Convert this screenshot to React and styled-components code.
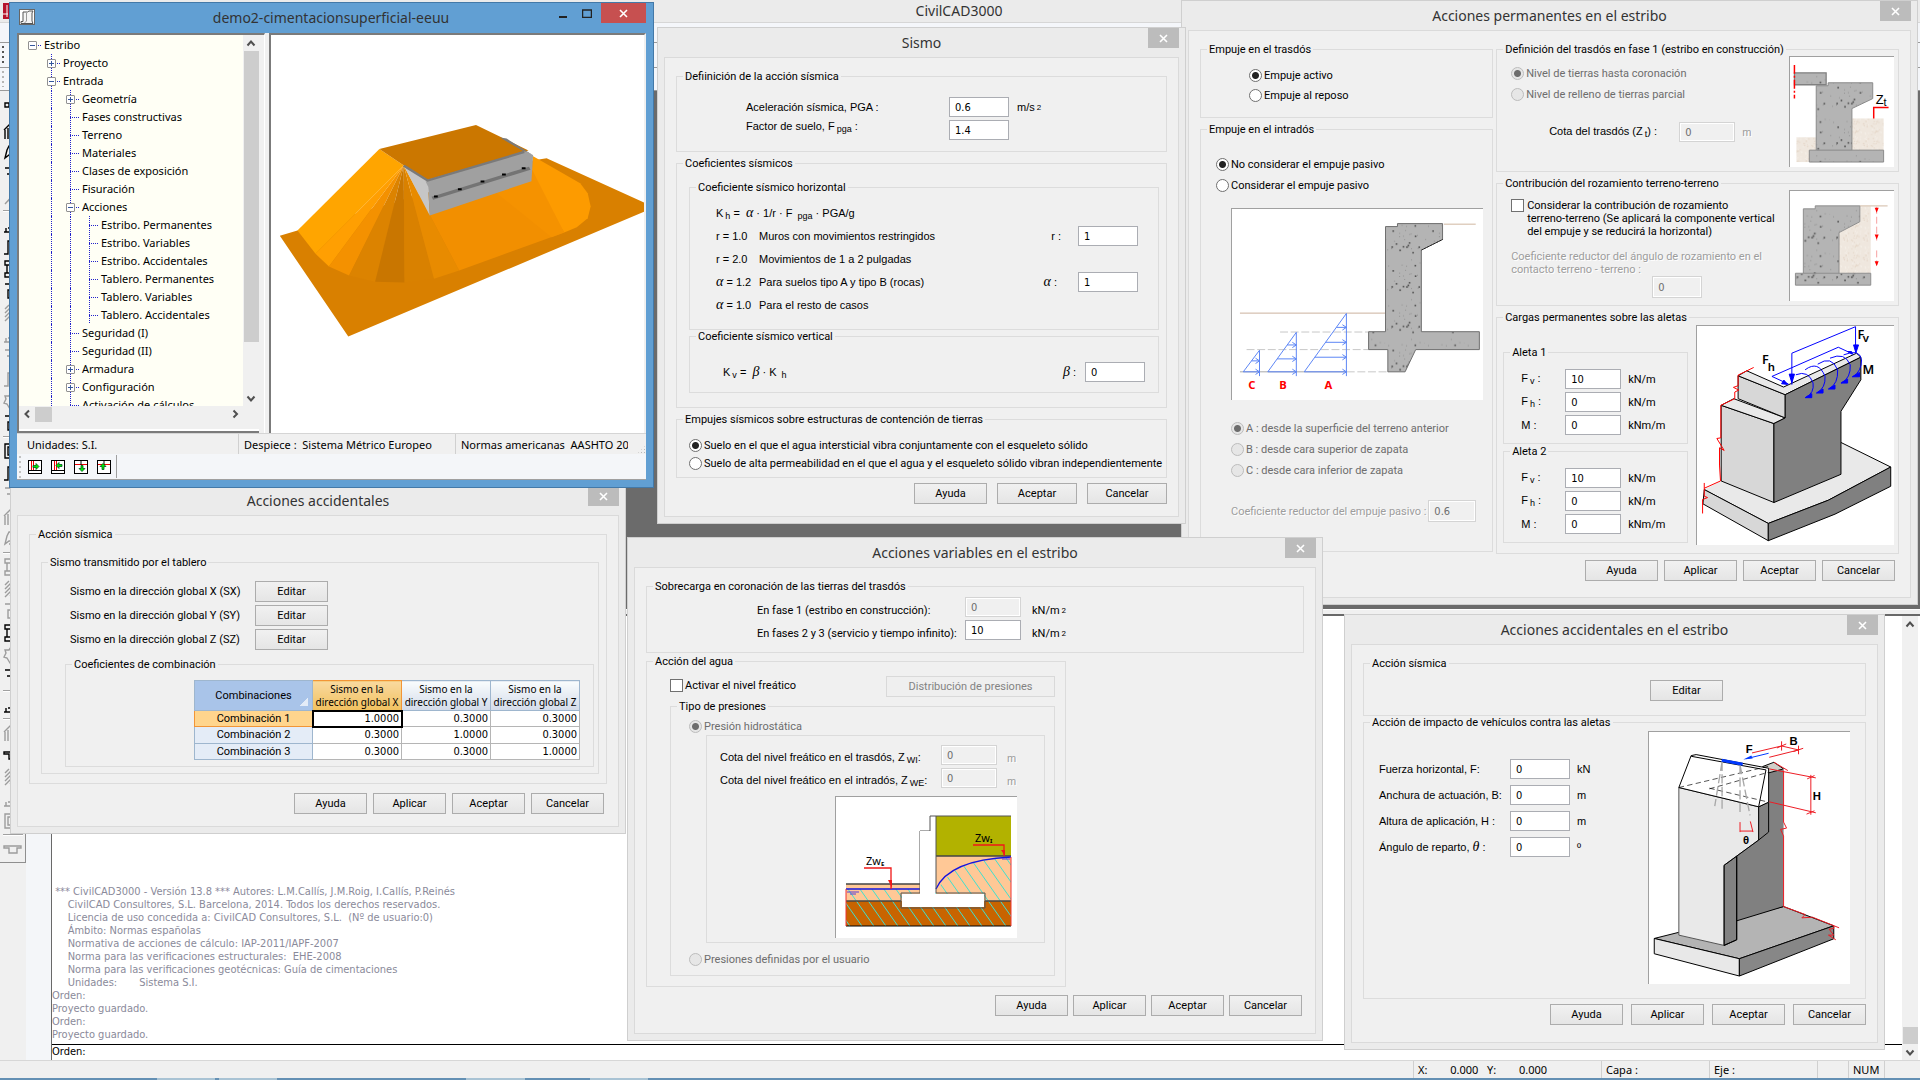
import React from 'react';
import styled, { createGlobalStyle, css } from 'styled-components';

const UI = 'Roboto, "Noto Sans", sans-serif';
const ARIAL = '"Liberation Sans", Arial, sans-serif';
const SEGOE = '"Noto Sans", "Open Sans", sans-serif';
const TAHOMA = '"DejaVu Sans Condensed", "DejaVu Sans", sans-serif';

const Global = createGlobalStyle`
  *, *::before, *::after { box-sizing: border-box; }
  body { margin: 0; background: #f0f0f0; color: #000; font: 11px/13px ${UI}; overflow: hidden; }
  input, button { font: inherit; color: inherit; margin: 0; }
  svg { display: block; }
`;

/* ---------- desktop and main window ---------- */

const Desktop = styled.div`
  position: relative;
  display: flex;
  flex-direction: column;
  height: 100vh;
  overflow: hidden;
`;

const MainTitle = styled.header`
  display: flex;
  align-items: center;
  height: 23px;
  padding: 0 3px;
  background: #ebebeb;
  border-bottom: 1px solid #d6d6d6;
  font: 14px/20px ${SEGOE};
  color: #333;
`;

const AppIcon = styled.div`
  width: 16px;
  height: 16px;
`;

const MainName = styled.h1`
  flex: 1;
  margin: 0;
  padding-right: 18px;
  text-align: center;
  font: inherit;
`;

const MainBars = styled.div`
  display: grid;
  grid-template-rows: 20px 25px 23px;
  background: #f4f6fa;
`;

const MainBar = styled.div`
  border-bottom: 1px solid #9a9a9a;
  padding: 3px 2px;
  &::before {
    content: '';
    display: block;
    width: 2px;
    height: 100%;
    background: repeating-linear-gradient(${p => p.$grip} 0 2px, transparent 2px 5px);
  }
`;

const MainBody = styled.div`
  flex: 1;
  display: flex;
  min-height: 0;
`;

const ToolColumn = styled.nav`
  display: flex;
  flex-direction: column;
  align-self: flex-start;
  width: 26px;
  padding: 7px 3px 2px;
  background: #f0f0f0;
  border-right: 1px solid #8f8f8f;
  border-bottom: 1px solid #8f8f8f;
`;

const ToolButton = styled.button`
  width: 20px;
  height: 22px;
  padding: 1px 0;
  border: 0;
  background: none;
  color: ${p => (p.$off ? '#9c9c9c' : '#000')};
`;

const ToolRule = styled.hr`
  width: 20px;
  height: 6px;
  margin: 0;
  border: 0;
  background: linear-gradient(transparent 2px, #a0a0a0 2px 3px, #fff 3px 4px, transparent 4px);
`;

const DockGap = styled.div`
  width: 25px;
  background: #f4f6f9;
`;

const Workspace = styled.div`
  flex: 1;
  display: flex;
  flex-direction: column;
  min-width: 0;
`;

const Mdi = styled.div`
  height: 518px;
  background: #6b6b6b;
`;

const SplitBar = styled.div`
  height: 7px;
  background: #f0f0f0;
  border-top: 1px solid #fff;
  border-bottom: 2px solid #696969;
`;

const Console = styled.section`
  flex: 1;
  display: flex;
  min-height: 0;
  padding-right: 2px;
  background: #fff;
  border-left: 1px solid #696969;
`;

const ConsoleText = styled.div`
  flex: 1;
  display: flex;
  flex-direction: column;
  justify-content: flex-end;
`;

const Log = styled.pre`
  margin: 0 0 3px;
  font: 11px/13px ${TAHOMA};
  color: #8a8a9a;
`;

const Prompt = styled.label`
  display: flex;
  height: 16px;
  border-top: 1px solid #000;
  font: 11px/14px ${TAHOMA};
  input { flex: 1; border: 0; padding: 0 4px; background: none; outline: 0; }
`;

const ScrollTrack = styled.div`
  display: flex;
  flex-direction: ${p => (p.$across ? 'row' : 'column')};
  align-items: center;
  justify-content: space-between;
  flex: none;
  ${p => (p.$across ? 'height: 16px; padding-right: 16px;' : 'width: 16px;')}
  background: #f0f0f0;
`;

const ScrollGap = styled.div`
  flex: 1;
`;

const Thumb = styled.div`
  background: #cdcdcd;
  ${p => (p.$across ? `width: ${p.$size}px; height: 15px;` : `height: ${p.$size}px; width: 15px;`)}
`;

const StatusBar = styled.footer`
  display: flex;
  justify-content: flex-end;
  height: 18px;
  border-top: 1px solid #d7d7d7;
  background: #f0f0f0;
  font: 11px/18px ${SEGOE};
`;

const StatusCell = styled.span`
  width: ${p => p.$w}px;
  padding-left: 4px;
  border-left: 1px solid #d0d0d0;
  white-space: pre;
`;

const TaskStrip = styled.div`
  height: 2px;
  background: linear-gradient(90deg, #6490b4 157px, #a9c3d4 157px 215px, #6490b4 215px 219px, #a9c3d4 219px 277px,
    #6490b4 277px 466px, #a9c3d4 466px 525px, #6490b4 525px 590px, #a9c3d4 590px 648px, #6490b4 648px);
`;

/* ---------- dialogs ---------- */

const Frame = styled.section`
  position: absolute;
  left: ${p => p.$x}px;
  top: ${p => p.$y}px;
  width: ${p => p.$w}px;
  display: flex;
  flex-direction: column;
  padding-bottom: 6px;
  background: #ebebeb;
  border: 1px solid #cfcfcf;
`;

const TitleBar = styled.header`
  display: grid;
  grid-template-columns: 31px 1fr 31px;
  height: 29px;
  padding: 0 6px;
`;

const Title = styled.h2`
  margin: 0;
  padding-top: 5px;
  text-align: center;
  font: 14px/20px ${SEGOE};
  color: #333;
`;

const Close = styled.button`
  display: flex;
  align-items: center;
  justify-content: center;
  height: 20px;
  padding: 0;
  border: 0;
  color: #fff;
  background: ${p => (p.$red ? '#c75050' : '#bcbcbc')};
`;

const Client = styled.div`
  display: flex;
  flex-direction: column;
  gap: ${p => p.$gap || 0}px;
  margin: 0 6px;
  padding: 12px 11px ${p => p.$foot}px;
  border: 1px solid #dadada;
  background: #f0f0f0;
`;

const Fieldset = styled.fieldset`
  min-width: 0;
  margin: 0;
  padding: 0;
  border: 1px solid #dcdcdc;
  ${p => p.$w && css`width: ${p.$w}px;`}
`;

const Legend = styled.legend`
  margin-left: 6px;
  padding: 0 2px;
  line-height: 13px;
`;

const Stack = styled.div`
  display: flex;
  flex-direction: column;
  gap: ${p => p.$gap || 0}px;
  padding: ${p => p.$pad || 0};
  ${p => p.$grow && css`flex: 1;`}
`;

const Line = styled.div`
  display: flex;
  align-items: ${p => p.$align || 'center'};
  justify-content: ${p => p.$justify || 'flex-start'};
  gap: ${p => p.$gap || 0}px;
  padding: ${p => p.$pad || 0};
`;

const Fields = styled.div`
  display: grid;
  grid-template-columns: ${p => p.$cols};
  grid-auto-rows: ${p => p.$row || 20}px;
  gap: ${p => p.$gap || 0}px 0;
  align-items: ${p => p.$align || 'center'};
  padding: ${p => p.$pad || 0};
  font-family: ${p => (p.$arial ? ARIAL : 'inherit')};
  white-space: nowrap;
`;

const Columns = styled.div`
  display: grid;
  grid-template-columns: 294fr 404fr;
  gap: 3px;
`;

const Text = styled.span`
  ${p => p.$off && css`color: #9d9d9d; text-shadow: 1px 1px #fff;`}
`;

const FieldLabel = styled.label`
  ${p => p.$off && css`color: #9d9d9d; text-shadow: 1px 1px #fff;`}
  ${p => p.$end && css`text-align: right; padding-right: ${p.$end}px;`}
  ${p => p.$top && css`align-self: start;`}
`;

const Wide = styled.span`grid-column: 1 / -1;`;
const Rest = styled.span`grid-column: 2 / -1;`;
const Unit = styled.span`font-family: ${UI};`;

const Sub = styled.span`
  display: inline-block;
  line-height: 10px;
  font-size: 9px;
  vertical-align: -2px;
  margin-left: 2px;
`;

const Sup = styled.span`
  display: inline-block;
  margin-left: 2px;
  line-height: 8px;
  font-size: 8px;
  vertical-align: 1px;
`;

const Greek = styled.i`
  font: italic 14px/13px "Liberation Serif", serif;
`;

const Field = styled.input`
  width: ${p => p.$w || 56}px;
  height: ${p => p.$h || 20}px;
  padding: 0 5px;
  border: 1px solid #abadb3;
  background: #fff;
  font: 11px/13px ${TAHOMA};
  outline: 0;
  &:disabled { border-color: #d4d4d4; background: #f0f0f0; color: #6d6d6d; box-shadow: inset 0 0 0 1px #fff; }
`;

const Push = styled.button`
  width: ${p => p.$w || 73}px;
  height: 21px;
  padding: 0;
  border: 1px solid #acacac;
  background: linear-gradient(#f1f1f1, #e5e5e5);
  &:disabled { border-color: #d9d9d9; background: #efefef; color: #838383; }
`;

const Choice = styled.label`
  display: flex;
  align-items: ${p => (p.$top ? 'flex-start' : 'center')};
  gap: ${p => (p.$top ? 3 : 2)}px;
  min-height: ${p => p.$h || 21}px;
  color: ${p => (p.$off ? '#6d6d6d' : '#000')};
  white-space: nowrap;
`;

const Radio = styled.input.attrs({ type: 'radio' })`
  appearance: none;
  flex: none;
  width: 13px;
  height: 13px;
  border: 1px solid #707070;
  border-radius: 50%;
  background: #fff;
  &:checked { background: radial-gradient(circle, #222 0 3px, #fff 4px); }
  &:disabled { border-color: #bcbcbc; background: #e6e6e6; }
  &:disabled:checked { background: radial-gradient(circle, #6d6d6d 0 3px, #e6e6e6 4px); }
`;

const Check = styled.input.attrs({ type: 'checkbox' })`
  appearance: none;
  flex: none;
  width: 13px;
  height: 13px;
  border: 1px solid #707070;
  background: #fff;
`;

const Picture = styled.figure`
  flex: none;
  align-self: flex-start;
  width: ${p => p.$w}px;
  height: ${p => p.$h}px;
  margin: 0;
  border-top: 1px solid #a0a0a0;
  border-left: 1px solid #a0a0a0;
  background: #fff;
  svg { width: 100%; height: 100%; }
`;

const Panel = styled.div`
  display: flex;
  flex-direction: column;
  gap: 8px;
  margin: 0 9px 0 35px;
  padding: 9px 0 4px 13px;
  border: 1px solid #dcdcdc;
`;

/* ---------- combination table ---------- */

const Sheet = styled.table`
  width: 386px;
  height: 80px;
  margin-left: 128px;
  border-collapse: collapse;
  table-layout: fixed;
  border: 1px solid #5f5f5f;
  background: #fff;
`;

const ColHead = styled.th`
  height: 30px;
  padding: 0;
  border: 1px solid #9eb6ce;
  font: 10px/13px ${SEGOE};
  white-space: nowrap;
  background: ${p => (p.$hot ? 'linear-gradient(#f9d99f, #f1c15f)' : 'linear-gradient(#f9fcfd, #d3dbe9)')};
  ${p => p.$hot && css`border-color: #f29536;`}
`;

const Corner = styled.th`
  width: 118px;
  padding: 0;
  font: 11px/13px ${UI};
  border: 1px solid #9eb6ce;
  background: linear-gradient(135deg, transparent 50%, #e4ecf7 50%) right 4px bottom 4px / 8px 8px no-repeat, #a9c4e9;
`;

const RowHead = styled.th`
  padding: 0;
  font: 11px/13px ${UI};
  border: 1px solid ${p => (p.$hot ? '#f29536' : '#9eb6ce')};
  background: ${p => (p.$hot ? '#ffd58d' : '#e4ecf7')};
`;

const Cell = styled.td`
  height: 16px;
  padding: 0 2px 0 0;
  border: 1px solid #b5b5b5;
  text-align: right;
  font: 11px/13px ${TAHOMA};
  ${p => p.$hot && css`outline: 2px solid #000; outline-offset: -1px;`}
`;

/* ---------- model window ---------- */

const ModelFrame = styled.section`
  position: absolute;
  left: 9px;
  top: 2px;
  width: 645px;
  padding: 0 7px 7px;
  background: #619fd3;
  border: 1px solid #4379a8;
`;

const ModelBar = styled.header`
  display: grid;
  grid-template-columns: 16px 1fr 20px 28px 45px;
  align-items: start;
  height: 30px;
  padding-left: 2px;
`;

const ModelIcon = styled.div`
  width: 16px;
  height: 16px;
  margin-top: 6px;
`;

const ModelTitle = styled(Title)`
  padding: 5px 0 0 74px;
`;

const GlyphButton = styled.button`
  height: 20px;
  padding: 0;
  border: 0;
  background: none;
  display: flex;
  align-items: center;
  justify-content: center;
`;

const ModelBody = styled.div`
  background: #f0f0f0;
`;

const Panes = styled.div`
  display: grid;
  grid-template-columns: 248px 1fr;
  gap: 4px;
  height: 401px;
  border-bottom: 1px solid #d5d5d5;
`;

const TreePane = styled.div`
  display: flex;
  flex-direction: column;
  padding-right: 5px;
  border: 2px solid #7b7b7b;
  border-right: 1px solid #fff;
  border-bottom: 0;
`;

const TreeMain = styled.div`
  display: flex;
  height: 371px;
`;

const TreeList = styled.ul`
  flex: 1;
  margin: 0;
  padding: 1px 0 0 9px;
  list-style: none;
  overflow: hidden;
  background: #fffff5;
  font: 11px/18px ${SEGOE};
`;

const Node = styled.li`
  display: flex;
  align-items: center;
  height: 18px;
  padding-left: 4px;
  white-space: nowrap;
`;

const Rail = styled.span`
  flex: none;
  width: 19px;
  height: 18px;
  border-left: 1px dotted ${p => (p.$on ? '#22c' : 'transparent')};
`;

const Knot = styled.span`
  flex: none;
  display: flex;
  align-items: center;
  width: 19px;
  height: 18px;
  padding-right: 9px;
  background:
    linear-gradient(90deg, #22c 50%, transparent 50%) 0 9px / 2px 1px repeat-x content-box,
    linear-gradient(#22c 50%, transparent 50%) 0 0 / 1px ${p => (p.$root ? 0 : 2)}px repeat-y;
`;

const Toggle = styled.button`
  flex: none;
  width: 9px;
  height: 9px;
  margin-left: -4px;
  padding: 0;
  border: 1px solid #919191;
  border-radius: 1px;
  background:
    linear-gradient(#34589c, #34589c) center / 5px 1px no-repeat,
    ${p => (p.$open ? '' : 'linear-gradient(#34589c, #34589c) center / 1px 5px no-repeat,')}
    #fff;
`;

const NodeName = styled.span`
  margin-left: -7px;
`;

const PaneFoot = styled.div`
  flex: 1;
  background: linear-gradient(transparent 7px, #fff 7px 9px, #7b7b7b 9px 11px, transparent 11px);
`;

const View = styled.div`
  border-top: 2px solid #7b7b7b;
  border-left: 2px solid #7b7b7b;
  border-right: 2px solid #f0f0f0;
  background: #fff;
  svg { width: 100%; height: 397px; }
`;

const ModelStatus = styled.div`
  display: grid;
  grid-template-columns: 221px 217px 1fr 18px;
  height: 20px;
  font: 11px/21px ${SEGOE};
  span { overflow: hidden; white-space: pre; padding-left: 5px; border-left: 1px solid #d0d0d0; }
  span:first-child { padding-left: 10px; border: 0; }
`;

const ModelTools = styled.div`
  display: flex;
  align-items: center;
  gap: 9px;
  height: 26px;
  padding-left: 2px;
  background: #f4f6f9;
  border-bottom: 1px solid #a0a0a0;
`;

const Grip = styled.i`
  width: 2px;
  height: 22px;
  margin-right: -2px;
  background: repeating-linear-gradient(#c2c2c2 0 2px, transparent 2px 5px);
`;

const ArrowButton = styled.button`
  width: 14px;
  height: 14px;
  padding: 0;
  border: 0;
  background: #fff;
`;

const ToolEnd = styled.i`
  width: 1px;
  height: 23px;
  margin-left: -4px;
  background: #a0a0a0;
`;

const Resize = styled.i`
  align-self: end;
  justify-self: end;
  width: 9px;
  height: 9px;
  background: radial-gradient(#b8b8b8 1px, transparent 1px) 0 0 / 3px 3px;
  clip-path: polygon(100% 0, 100% 100%, 0 100%);
`;

/* ---------- shared pieces ---------- */

const Cross = () => (
  <svg width="9" height="9" viewBox="0 0 9 9"><path d="M1 1l7 7M8 1l-7 7" stroke="currentColor" strokeWidth="1.6" /></svg>
);

const Chevron = ({ d }) => (
  <svg width="16" height="16" viewBox="0 0 16 16"><path d={d} fill="none" stroke="#505050" strokeWidth="2" /></svg>
);
const UP = 'M4.500 10.500 8 6.500l3.500 4';
const DOWN = 'M4.500 6.500 8 10.500l3.500-4';
const LEFT = 'M10 4.500 6.500 8l3.500 3.500';
const RIGHT = 'M6.500 4.500 10 8l-3.500 3.500';

const Dialog = ({ title, x, y, w, gap, foot, children }) => (
  <Frame $x={x} $y={y} $w={w}>
    <TitleBar>
      <i /><Title>{title}</Title><Close aria-label="Cerrar"><Cross /></Close>
    </TitleBar>
    <Client $gap={gap} $foot={foot}>{children}</Client>
  </Frame>
);

const Group = ({ title, w, pad, gap, children }) => (
  <Fieldset $w={w}>
    <Legend>{title}</Legend>
    <Stack $pad={pad} $gap={gap}>{children}</Stack>
  </Fieldset>
);

const Option = ({ name, on, off, h, children }) => (
  <Choice $off={off} $h={h}>
    <Radio name={name} defaultChecked={on} disabled={off} />{children}
  </Choice>
);

const Actions = ({ gap, pad }) => (
  <Line $justify="flex-end" $gap={gap} $pad={pad}>
    {['Ayuda', 'Aplicar', 'Aceptar', 'Cancelar'].map(l => <Push key={l}>{l}</Push>)}
  </Line>
);

/* ---------- drawings ---------- */

const Textures = ({ id, s = 1 }) => {
  const dots = (n, size, seed) => Array.from({ length: n }, (_, i) => {
    const a = Math.sin((i + 1) * seed) * 10000;
    const b = Math.sin((i + 7) * seed * 1.7) * 10000;
    return [(a - Math.floor(a)) * size, (b - Math.floor(b)) * size];
  });
  return (
    <defs>
      <pattern id={id + 'c'} width={40 * s} height={40 * s} patternUnits="userSpaceOnUse">
        <rect width={40 * s} height={40 * s} fill="#b4b4b4" />
        {dots(34, 40 * s, 12.9).map(([x, y], i) => (
          <rect key={i} x={x} y={y} width={s * (i % 3 ? 0.8 : 1.6)} height={s * (i % 3 ? 0.8 : 1.6)} fill={i % 3 ? '#7d7d7d' : '#505050'} />
        ))}
      </pattern>
      <pattern id={id + 's'} width={20 * s} height={20 * s} patternUnits="userSpaceOnUse">
        <rect width={20 * s} height={20 * s} fill="#efe7de" />
        {dots(60, 20 * s, 7.3).map(([x, y], i) => (
          <rect key={i} x={x} y={y} width={s} height={s} fill={i % 2 ? '#e3d3c3' : '#f7f2ec'} />
        ))}
      </pattern>
    </defs>
  );
};

const PassivePush = () => {
  const tri = (x0, x1, top, ys) => (
    <g stroke="#5c85f5" fill="none" strokeWidth="3">
      <path d={`M${x0} 517L${x1} ${top}V530`} />
      {ys.map(y => {
        const sx = x0 + ((517 - y) / (517 - top)) * (x1 - x0);
        return <path key={y} d={`M${sx} ${y}H${x1}M${x1 - 12} ${y - 8}L${x1} ${y}l-12 8`} />;
      })}
    </g>
  );
  return (
    <svg viewBox="20 26 753 576">
      <Textures id="pp" s={3} />
      <path d="M42 340H481" stroke="#cbb09c" strokeWidth="3" />
      <path d="M657 72H753" stroke="#e0cfc0" strokeWidth="5" />
      <path d="M163 397H430M62 450H430M364 517H488" stroke="#c8c8c8" strokeWidth="3" strokeDasharray="24 8" />
      <path d="M42 517H364" stroke="#a8a8a8" strokeWidth="3" />
      <path d="M481 79H517V70H653V118L589 150V396H764V450H572L540 517H488V450H430V396H481Z" fill="url(#ppc)" stroke="#6e6e6e" strokeWidth="3" />
      <path d="M653 118L589 150" stroke="#000" strokeWidth="3" strokeDasharray="3 2" />
      {tri(52, 101, 452, [484, 517])}
      {tri(126, 212, 398, [436, 478, 517])}
      {tri(236, 363, 341, [383, 428, 473, 517])}
      <g fill="#f00" fontFamily="Noto Sans" fontWeight="700" fontSize="34" textAnchor="middle">
        <text x="78" y="569">C</text><text x="172" y="569">B</text><text x="309" y="569">A</text>
      </g>
    </svg>
  );
};

const BackfillLevel = () => (
  <svg viewBox="0 0 104 111">
    <Textures id="bl" />
    <rect x="6" y="81" width="20" height="25" fill="url(#bls)" />
    <rect x="62" y="62" width="32" height="33" fill="url(#bls)" />
    <path d="M4 16H36V28H4Z" fill="url(#blc)" stroke="#808080" strokeWidth="1.300" />
    <path d="M26 29H38V26H83V42L62 52V94H94V106H19V94H26Z" fill="url(#blc)" stroke="#8a8a8a" />
    <path d="M26 94H62" stroke="#8a8a8a" />
    <path d="M4 8V42" stroke="#f00" strokeWidth="1.500" strokeDasharray="9 2 2 2" />
    <path d="M84 62V51H99" fill="none" stroke="#f00" strokeWidth="1.500" />
    <text x="86" y="47" fontFamily="Liberation Sans" fontSize="13">Z<tspan fontSize="11" dy="2">t</tspan></text>
  </svg>
);

const SoilFriction = () => (
  <svg viewBox="0 0 104 111">
    <Textures id="sf" />
    <path d="M70 15H81V83H49V42L70 31Z" fill="url(#sfs)" />
    <path d="M70 15H98" stroke="#e0d0c2" strokeWidth="1.500" />
    <path d="M13 18H25V15H70V31L49 42V83H81V95H5V83H13Z" fill="url(#sfc)" stroke="#8e8e8e" />
    <path d="M13 83H49" stroke="#8e8e8e" />
    <path d="M87 16V50M87 60V75" stroke="#f6a0a0" strokeDasharray="7 3" />
    <path d="M85 17h4l-2 5zM85 44h4l-2 5zM85 71h4l-2 5z" fill="#f00" />
  </svg>
);

const WingLoads = () => (
  <svg viewBox="25 13 592 660" fill="none" stroke="#000" strokeWidth="3" strokeLinejoin="round">
    <path d="M46 506L97 480L458 364L608 438L420 538L239 608Z" fill="#e9e9e9" stroke="none" />
    <path d="M458 364L608 438L420 538L239 608L46 506" />
    <path d="M42 549L46 506L239 608V660Z" fill="#d7d7d7" />
    <path d="M239 608L420 538L608 438V496L440 580L239 660Z" fill="#808080" />
    <path d="M97 252V480L256 545V307Z" fill="#d7d7d7" />
    <path d="M97 252L135 232L290 290L256 307Z" fill="#e9e9e9" />
    <path d="M148 163V232L290 290V220Z" fill="#d7d7d7" />
    <path d="M148 163L174 148L285 197L505 95L518 107L290 220Z" fill="#e9e9e9" />
    <path d="M290 220L518 107V175L458 270V460L256 545V307L290 290Z" fill="#808080" />
    <path d="M195 138L148 161V193L134 198L150 206L138 212V232L96 252V350L84 352L106 388L92 380V432L95 480L46 502M46 486V526L56 530L41 536V578" stroke="#f00" />
    <g stroke="#00f">
      <path d="M310 190V95L502 15V85M300 188L250 165L450 77L495 98" />
      <path d="M302 158l8 26 8-26zM496 70l7 24 8-24zM297 189l-18-2 7-11zM492 98l-14-8 12 0z" fill="#00f" />
      <path d="M322 160Q360 145 374 185Q378 215 352 228M350 145Q390 115 410 165Q412 200 386 214M388 128Q430 100 448 145Q450 188 422 202M425 110Q470 90 486 130Q488 170 460 184M466 100Q515 80 520 115Q520 150 495 165" />
      <path d="M350 229l20-12v12zM384 215l20-12v12zM420 203l20-12v12zM458 185l20-12v12zM492 166l22-13v13z" fill="#00f" />
    </g>
    <g fill="#000" stroke="none" fontFamily="Noto Sans" fontWeight="600" fontSize="38">
      <text x="220" y="128">F</text><text x="237" y="150" fontSize="34">h</text>
      <text x="508" y="52">F</text><text x="524" y="61" fontSize="34">v</text>
      <text x="523" y="158">M</text>
    </g>
  </svg>
);

const Impact = () => (
  <svg viewBox="29 19 603 758" fill="none" stroke="#000" strokeWidth="3" strokeLinejoin="round">
    <path d="M44 640L116 622L433 544L584 602L300 701Z" fill="#b4b4b4" />
    <path d="M44 640V686L300 753V701Z" fill="#e8e8e8" />
    <path d="M300 701L584 602V641L300 753Z" fill="#878787" />
    <path d="M388 125L433 133V544L292 587V392L388 320Z" fill="#808080" stroke="none" />
    <path d="M370 123L404 110L433 130L388 142Z" fill="#d0cec8" />
    <path d="M292 392V644L254 661V420Z" fill="#828282" />
    <path d="M118 186L358 244V344L254 420V661L118 630Z" fill="#e9e9e9" stroke="#555" />
    <path d="M358 244L388 230V320L358 344Z" fill="#828282" />
    <path d="M358 344L254 420M254 420V661L292 644V392M292 587L433 544" />
    <path d="M118 186L155 90L170 87L388 128V230L358 244L118 186Z" fill="#fff" />
    <path d="M155 92L380 133L358 244" />
    <path d="M118 186L388 122M210 190L388 140M210 188L388 230" strokeDasharray="16 10" strokeWidth="2" />
    <path d="M248 108L226 242M248 108V250M302 118V265M302 118L332 270" stroke="#a8a8a8" strokeWidth="4" strokeDasharray="28 10" />
    <path d="M247 104L310 116" stroke="#0038ff" strokeWidth="9" />
    <path d="M388 83L322 99" stroke="#0038ff" /><path d="M312 102l24-12 4 9z" fill="#0038ff" stroke="none" />
    <g stroke="#ed1c24">
      <path d="M338 82L427 61L478 73L390 95M427 47V75M413 67L441 55M478 60V86M462 78L492 68" />
      <path d="M404 110L446 135M390 130L530 157M390 229L530 262M515 148V268M504 160L526 150M502 266L526 256" />
      <path d="M433 135V290L442 308L424 312L433 332V544L498 568L488 578L520 576L600 608" />
      <path d="M584 602V610L570 612L584 630L568 630L590 644" />
      <path d="M302 290V320M302 317H341M333 288L341 320" />
    </g>
    <g fill="#000" stroke="none" fontFamily="Liberation Sans" fontWeight="700" fontSize="34">
      <text x="319" y="81">F</text><text x="451" y="57">B</text><text x="521" y="224">H</text><text x="311" y="356">θ</text>
    </g>
  </svg>
);

const Pressure = () => (
  <svg viewBox="0 0 181 141">
    <defs><clipPath id="wet"><path d="M10 92H84V96H100Q115 62 175 60V129H10Z" /></clipPath></defs>
    <rect x="100" y="19" width="75" height="41" fill="#b2b200" />
    <path d="M100 59H175V104H100ZM10 87H85V104H10Z" fill="#ffc896" />
    <rect x="10" y="104" width="165" height="25" fill="#c86400" />
    <g clipPath="url(#wet)" stroke="#3fe0d0" strokeWidth="1">
      {Array.from({ length: 21 }, (_, i) => <path key={i} d={`M${i * 12 - 60} 58L${i * 12 - 8} 132`} />)}
    </g>
    <path d="M10 87H84M10 104H65M100 59H175M149 104H175" stroke="#444" strokeWidth="1.500" />
    <path d="M10 129H175" stroke="#000" />
    <path d="M10 92H85M100 92Q113 63 175 60" fill="none" stroke="#1414e0" strokeWidth="1.300" />
    <path d="M11 95h12M14 97h6M166 62h8" stroke="#5a3fd6" />
    <path d="M10 92V129M175 60V129" stroke="#e33" />
    <path d="M84 34H94V19H175M84 34V96H65V111H149V96H100V19" fill="none" stroke="#555" />
    <path d="M84 34H95V20H99V97H148V110H66V97H84Z" fill="#fff" />
    <path d="M28 71H55V92M137 48H168V59" fill="none" stroke="#f01818" strokeWidth="1.300" />
    <path d="M52 83h4v8zM165 53h4v6z" fill="#f01818" />
    <g fontFamily="Noto Sans" fontSize="11">
      <text x="30" y="68">Zw<tspan fontSize="6" fontWeight="700" dy="1">E</tspan></text>
      <text x="139" y="45">Zw<tspan fontSize="6" fontWeight="700" dy="1">I</tspan></text>
    </g>
  </svg>
);

const Terrain = () => (
  <svg viewBox="642 105 888 1192" preserveAspectRatio="none">
    <path d="M663 708L705 692L958 600L1265 482L1298 475L1530 608V636L826 1010Z" fill="#d98000" />
    <path d="M900 447L705 692L748 762L958 497Z" fill="#ffa500" />
    <path d="M958 497L748 762L780 800Z" fill="#ff9f02" />
    <path d="M958 497L780 800L828 827Z" fill="#f49100" />
    <path d="M958 497L828 827L890 846Z" fill="#dc8300" />
    <path d="M958 497L890 846L960 848Z" fill="#c97600" />
    <path d="M958 497L960 848L1030 837Z" fill="#d98100" />
    <path d="M958 497L1030 837L1090 812Z" fill="#e88b00" />
    <path d="M958 497L1090 812L1340 698L1262 540L1020 640Z" fill="#f28f00" />
    <path d="M1265 468L1262 540L1340 698L1370 682L1396 655L1403 620L1396 580L1378 550Z" fill="#fd9b00" />
    <path d="M1264 510L1340 698L1310 712L1180 580Z" fill="#f59200" />
    <path d="M900 447L1130 375L1255 452L1015 540L958 497Z" fill="#cb7700" />
    <path d="M1187 413L1203 416L1266 466L1240 452Z" fill="#7a7a7a" />
    <path d="M958 497L1015 540L1020 647Z" fill="#c6c6c6" />
    <path d="M1010 545L1250 455L1266 466L1262 544L1020 647L1016 560Z" fill="#a0a0a0" />
    <path d="M958 497L1015 542L1245 456" fill="none" stroke="#7a7a7a" strokeWidth="7" />
    <path d="M1026 595L1258 505" stroke="#747474" strokeWidth="10" />
    <path d="M1030 590h9M1087 568h9M1141 545h9M1192 524h9M1239 505h9" stroke="#000" strokeWidth="6" />
  </svg>
);

const SHAPES = {
  node: 'M2 4h4v4H2zM6 6l6 10M14 3v14',
  arch: 'M1 9l6-6 10 2M2 9v9M5 7v11M9 6v12M13 6v12',
  ring: 'M6 3h10v9H6l-4 3 2-8zM6 15h8',
  tee: 'M2 3h14M9 3v5M4 9h12v2l-4 6',
  pen: 'M2 17L12 6l4 3-9 8M5 13l4 3',
  wall: 'M1 17h16M3 13v4M5 13h4V2M8 13h7v4',
  bench: 'M1 17h4V4h12v4M9 4v13',
  stack: 'M2 2h14v4H2zM4 6v8M8 6v8M2 14h14v4H2z',
  step: 'M2 3h14v6H5v8h12',
  hatch: 'M2 6l4-4M2 10l8-8M2 14L14 2M2 18L16 4M7 17l9-9',
  slab: 'M1 7h17v2h-4v5H6V9H1z',
  gear: 'M2 5h4l2-3 4 3 4 2v7l-4 3-5 1-3-5-3-1 2-4z',
  frame: 'M2 3h16v14H2zM5 6h10v8H5z',
};
const TOOLS = [
  'node', 'arch', 'ring', 'tee', '-pen', 0,
  'wall', 'bench', 'stack', 'step', '-hatch', '-wall', '-tee', '-bench', '-gear', 'step', 0,
  'frame', 'bench', '-tee', '-arch', '-ring', 0,
  '-stack', '-hatch', '-step', 'stack', '-gear', 'tee', 0,
  'wall', 0, '-arch', 'slab', '-hatch', '-wall', '-frame', 0, '-slab',
];

/* ---------- windows ---------- */

const LOG = ` *** CivilCAD3000 - Versión 13.8 *** Autores: L.M.Callís, J.M.Roig, I.Callís, P.Reinés
     CivilCAD Consultores, S.L. Barcelona, 2014. Todos los derechos reservados.
     Licencia de uso concedida a: CivilCAD Consultores, S.L.  (Nº de usuario:0)
     Ámbito: Normas españolas
     Normativa de acciones de cálculo: IAP-2011/IAPF-2007
     Norma para las verificaciones estructurales:  EHE-2008
     Norma para las verificaciones geotécnicas: Guía de cimentaciones
     Unidades:       Sistema S.I.
Orden:
Proyecto guardado.
Orden:
Proyecto guardado.`;

const Main = () => (
  <>
    <MainTitle>
      <AppIcon>
        <svg width="16" height="16" viewBox="0 0 16 16"><rect width="16" height="16" fill="#b5122b" /><path d="M0 11h5M4 2v12M8 3v10h6" stroke="#fff" fill="none" /></svg>
      </AppIcon>
      <MainName>CivilCAD3000</MainName>
    </MainTitle>
    <MainBars><MainBar $grip="transparent" /><MainBar $grip="#555" /><MainBar $grip="#b5b5b5" /></MainBars>
    <MainBody>
      <ToolColumn>
        {TOOLS.map((t, i) => t === 0 ? <ToolRule key={i} /> : (
          <ToolButton key={i} $off={t[0] === '-'} aria-label={`Herramienta ${i + 1}`}>
            <svg width="20" height="20" viewBox="0 0 20 20">
              <path d={SHAPES[t.replace('-', '')]} fill="none" stroke="currentColor" strokeWidth="1.400" />
            </svg>
          </ToolButton>
        ))}
      </ToolColumn>
      <DockGap />
      <Workspace>
        <Mdi />
        <SplitBar />
        <Console>
          <ConsoleText>
            <Log>{LOG}</Log>
            <Prompt>Orden:<input /></Prompt>
          </ConsoleText>
          <ScrollTrack>
            <Chevron d={UP} /><ScrollGap /><Thumb $size={17} /><Chevron d={DOWN} />
          </ScrollTrack>
        </Console>
      </Workspace>
    </MainBody>
    <StatusBar>
      <StatusCell $w={188}>{'X:'.padEnd(10)}0.000{'   Y:'.padEnd(13)}0.000</StatusCell>
      <StatusCell $w={108}>Capa :</StatusCell>
      <StatusCell $w={108}>Eje :</StatusCell>
      <StatusCell $w={31} />
      <StatusCell $w={36}>NUM</StatusCell>
      <StatusCell $w={36} />
    </StatusBar>
    <TaskStrip />
  </>
);

const TREE = [
  ['Estribo', 0, '-'], ['Proyecto', 1, '+'], ['Entrada', 1, '-'], ['Geometría', 2, '+'], ['Fases constructivas', 2],
  ['Terreno', 2], ['Materiales', 2], ['Clases de exposición', 2], ['Fisuración', 2], ['Acciones', 2, '-'],
  ['Estribo. Permanentes', 3], ['Estribo. Variables', 3], ['Estribo. Accidentales', 3], ['Tablero. Permanentes', 3],
  ['Tablero. Variables', 3], ['Tablero. Accidentales', 3], ['Seguridad (I)', 2], ['Seguridad (II)', 2],
  ['Armadura', 2, '+'], ['Configuración', 2, '+'], ['Activación de cálculos', 2],
];

const Tree = () => (
  <TreeList>
    {TREE.map(([name, level, box]) => (
      <Node key={name}>
        {Array.from({ length: level }, (_, i) => <Rail key={i} $on={i > 0} />)}
        <Knot $root={level === 0}>{box && <Toggle $open={box === '-'} aria-label={name} />}</Knot>
        <NodeName>{name}</NodeName>
      </Node>
    ))}
  </TreeList>
);

const ArrowIcon = ({ turn, side }) => (
  <svg width="14" height="14" viewBox="0 0 14 14">
    <rect x=".5" y=".5" width="13" height="13" fill="#fff" stroke="#000" />
    <path d={side ? 'M3.500 1v9M5.500 1v9' : 'M1 4.500h12'} stroke="#e00" />
    <path d={side ? 'M1 10.500h12' : 'M7 1v4'} stroke="#000" />
    <path d="M5 5.500h3V3.500l3 3L8 9.500V7.500H5z" fill="#0e0" stroke="#052" strokeWidth=".8" transform={side ? (turn ? 'rotate(180 8 6)' : '') : `rotate(${turn} 7 7.500)`} />
  </svg>
);

const Model = () => (
  <ModelFrame>
    <ModelBar>
      <ModelIcon>
        <svg width="16" height="16" viewBox="0 0 16 16">
          <rect x=".5" y=".5" width="15" height="15" fill="#fff" stroke="#666" />
          <path d="M2 14.500V12.500h2V3h4.500l1.500-1h4l-1 2v8l1 2.500z" fill="#f4f4f4" stroke="#555" /><path d="M7.500 4v8l-2 2" fill="none" stroke="#999" />
        </svg>
      </ModelIcon>
      <ModelTitle>demo2-cimentacionsuperficial-eeuu</ModelTitle>
      <GlyphButton aria-label="Minimizar"><svg width="8" height="9"><path d="M0 8h8" stroke="#222" strokeWidth="2" /></svg></GlyphButton>
      <GlyphButton aria-label="Maximizar"><svg width="10" height="9"><path d="M.5 1h9v7.500h-9z" fill="none" stroke="#222" strokeWidth="1.500" /></svg></GlyphButton>
      <Close $red aria-label="Cerrar"><Cross /></Close>
    </ModelBar>
    <ModelBody>
      <Panes>
        <TreePane>
          <TreeMain>
            <Tree />
            <ScrollTrack>
              <Chevron d={UP} /><Thumb $size={291} /><ScrollGap /><Chevron d={DOWN} />
            </ScrollTrack>
          </TreeMain>
          <ScrollTrack $across>
            <Chevron d={LEFT} /><Thumb $across $size={17} /><ScrollGap /><Chevron d={RIGHT} />
          </ScrollTrack>
          <PaneFoot />
        </TreePane>
        <View><Terrain /></View>
      </Panes>
      <ModelStatus>
        <span>Unidades: S.I.</span>
        <span>Despiece :  Sistema Métrico Europeo</span>
        <span>Normas americanas  AASHTO 20</span>
        <Resize />
      </ModelStatus>
      <ModelTools>
        <Grip />
        <ArrowButton aria-label="Derecha"><ArrowIcon side turn={0} /></ArrowButton>
        <ArrowButton aria-label="Izquierda"><ArrowIcon side turn={180} /></ArrowButton>
        <ArrowButton aria-label="Abajo"><ArrowIcon turn={90} /></ArrowButton>
        <ArrowButton aria-label="Arriba"><ArrowIcon turn={270} /></ArrowButton>
        <ToolEnd />
      </ModelTools>
    </ModelBody>
  </ModelFrame>
);

const Sismo = () => (
  <Dialog title="Sismo" x={657} y={27} w={529} gap={5} foot={12}>
    <Group title="Defiinición de la acción sísmica">
      <Fields $arial $gap={3} $cols="203px 68px 1fr" $pad="14px 0 11px 69px">
        <FieldLabel htmlFor="pga">Aceleración sísmica, PGA :</FieldLabel>
        <Field id="pga" $w={60} defaultValue="0.6" /><span>m/s<Sup>2</Sup></span>
        <FieldLabel $top htmlFor="fpga">Factor de suelo, F<Sub>pga</Sub> :</FieldLabel>
        <Field id="fpga" $w={60} defaultValue="1.4" />
      </Fields>
    </Group>
    <Group title="Coeficientes sísmicos" pad="11px 7px 14px 12px">
      <Group title="Coeficiente sísmico horizontal">
        <Fields $arial $gap={3} $cols="43px 1fr 61px 60px" $pad="9px 20px 14px 26px">
          <Wide>K<Sub>h</Sub> = &nbsp;<Greek>α</Greek> · 1/r · F <Sub>pga</Sub> · PGA/g</Wide>
          <span>r = 1.0</span><span>Muros con movimientos restringidos</span>
          <FieldLabel $end={17} htmlFor="r">r :</FieldLabel><Field id="r" $w={60} defaultValue="1" />
          <span>r = 2.0</span><Rest>Movimientos de 1 a 2 pulgadas</Rest>
          <span><Greek>α</Greek> = 1.2</span><span>Para suelos tipo A y tipo B (rocas)</span>
          <FieldLabel $end={21} htmlFor="alfa"><Greek>α</Greek> :</FieldLabel><Field id="alfa" $w={60} defaultValue="1" />
          <span><Greek>α</Greek> = 1.0</span><Rest>Para el resto de casos</Rest>
        </Fields>
      </Group>
      <Group title="Coeficiente sísmico vertical">
        <Fields $arial $cols="1fr 60px 60px" $pad="19px 13px 10px 33px">
          <span>K<Sub>v</Sub> = &nbsp;<Greek>β</Greek> · K <Sub>h</Sub></span>
          <FieldLabel $end={9} htmlFor="beta"><Greek>β</Greek> :</FieldLabel><Field id="beta" $w={60} defaultValue="0" />
        </Fields>
      </Group>
    </Group>
    <Group title="Empujes sísmicos sobre estructuras de contención de tierras" pad="10px 0 5px 12px">
      <Option name="agua" on h={18}>Suelo en el que el agua intersticial vibra conjuntamente con el esqueleto sólido</Option>
      <Option name="agua" h={18}>Suelo de alta permeabilidad en el que el agua y el esqueleto sólido vibran independientemente</Option>
    </Group>
    <Line $justify="flex-end" $gap={10}><Push>Ayuda</Push><Push $w={80}>Aceptar</Push><Push $w={80}>Cancelar</Push></Line>
  </Dialog>
);

const Wing = ({ n }) => (
  <Group title={`Aleta ${n}`}>
    <Fields $arial $gap={3} $cols="44px 63px 1fr" $pad="10px 0 8px 17px">
      {[['v', '10', 'kN/m'], ['h', '0', 'kN/m'], ['', '0', 'kNm/m']].map(([s, v, u]) => (
        <React.Fragment key={s}>
          <FieldLabel htmlFor={`w${n}${s}`}>{s ? <>F<Sub>{s}</Sub> :</> : 'M :'}</FieldLabel>
          <Field id={`w${n}${s}`} defaultValue={v} /><Unit>{u}</Unit>
        </React.Fragment>
      ))}
    </Fields>
  </Group>
);

const Permanent = () => (
  <Dialog title="Acciones permanentes en el estribo" x={1181} y={0} w={737} gap={6} foot={16}>
    <Columns>
      <Stack $gap={5}>
        <Group title="Empuje en el trasdós" pad="9px 0 12px 48px">
          <Option name="tras" on>Empuje activo</Option>
          <Option name="tras" h={19}>Empuje al reposo</Option>
        </Group>
        <Group title="Empuje en el intradós" pad="18px 0 29px 15px">
          <Option name="intra" on>No considerar el empuje pasivo</Option>
          <Option name="intra">Considerar el empuje pasivo</Option>
          <Stack $pad="12px 0 0 15px">
            <Picture $w={252} $h={192}><PassivePush /></Picture>
            <Stack $pad="18px 0 19px">
              <Option name="cara" on off>A : desde la superficie del terreno anterior</Option>
              <Option name="cara" off>B : desde cara superior de zapata</Option>
              <Option name="cara" off>C : desde cara inferior de zapata</Option>
            </Stack>
            <Line $gap={2}>
              <FieldLabel $off htmlFor="pasivo">Coeficiente reductor del empuje pasivo :</FieldLabel>
              <Field id="pasivo" $w={48} $h={22} disabled defaultValue="0.6" />
            </Line>
          </Stack>
        </Group>
      </Stack>
      <Stack $gap={5}>
        <Group title="Definición del trasdós en fase 1 (estribo en construcción)" pad="0 4px 4px 0">
          <Line $align="flex-start">
            <Stack $grow $pad="7px 0 0 14px">
              <Option name="nivel" on off>Nivel de tierras hasta coronación</Option>
              <Option name="nivel" off>Nivel de relleno de tierras parcial</Option>
              <Fields $arial $cols="130px 63px 1fr" $pad="17px 0 0 38px">
                <FieldLabel htmlFor="zt">Cota del trasdós (Z<Sub>t</Sub>) :</FieldLabel>
                <Field id="zt" disabled defaultValue="0" /><Text $off>m</Text>
              </Fields>
            </Stack>
            <Picture $w={105} $h={111}><BackfillLevel /></Picture>
          </Line>
        </Group>
        <Group title="Contribución del rozamiento terreno-terreno" pad="0 4px 4px 0">
          <Line $align="flex-start">
            <Stack $grow $pad="9px 0 0 14px" $gap={12}>
              <Choice $top>
                <Check />
                <span>Considerar la contribución de rozamiento<br />terreno-terreno (Se aplicará la componente vertical<br />del empuje y se reducirá la horizontal)</span>
              </Choice>
              <Stack>
                <FieldLabel $off htmlFor="roz">Coeficiente reductor del ángulo de rozamiento en el<br />contacto terreno - terreno :</FieldLabel>
                <Line $pad="0 0 0 141px"><Field id="roz" $w={50} $h={22} disabled defaultValue="0" /></Line>
              </Stack>
            </Stack>
            <Picture $w={105} $h={111}><SoilFriction /></Picture>
          </Line>
        </Group>
        <Group title="Cargas permanentes sobre las aletas" pad="1px 4px 8px 6px">
          <Line $align="flex-start" $gap={8}>
            <Stack $grow $gap={1} $pad="21px 0 0"><Wing n={1} /><Wing n={2} /></Stack>
            <Picture $w={198} $h={220}><WingLoads /></Picture>
          </Line>
        </Group>
      </Stack>
    </Columns>
    <Actions gap={6} pad="0 4px 0 0" />
  </Dialog>
);

const Variable = () => (
  <Dialog title="Acciones variables en el estribo" x={627} y={537} w={696} gap={2} foot={17}>
    <Group title="Sobrecarga en coronación de las tierras del trasdós">
      <Fields $gap={3} $align="end" $cols="208px 67px 1fr" $pad="4px 0 12px 110px">
        <FieldLabel htmlFor="f1">En fase 1 (estribo en construcción):</FieldLabel>
        <Field id="f1" disabled defaultValue="0" /><span>kN/m<Sup>2</Sup></span>
        <FieldLabel htmlFor="f2">En fases 2 y 3 (servicio y tiempo infinito):</FieldLabel>
        <Field id="f2" defaultValue="10" /><span>kN/m<Sup>2</Sup></span>
      </Fields>
    </Group>
    <Group title="Acción del agua" w={420} pad="8px 10px 10px 23px" gap={3}>
      <Line $align="flex-start" $justify="space-between">
        <Choice $h={18}><Check />Activar el nivel freático</Choice>
        <Push $w={169} disabled>Distribución de presiones</Push>
      </Line>
      <Group title="Tipo de presiones" pad="5px 0 7px">
        <Line $pad="0 0 0 18px"><Option name="pres" on off h={17}>Presión hidrostática</Option></Line>
        <Panel>
          <Fields $arial $gap={3} $align="end" $cols="221px 66px 1fr">
            <FieldLabel htmlFor="zwi">Cota del nivel freático en el trasdós, Z<Sub>WI</Sub>:</FieldLabel>
            <Field id="zwi" disabled defaultValue="0" /><Text $off>m</Text>
            <FieldLabel htmlFor="zwe">Cota del nivel freático en el intradós, Z<Sub>WE</Sub>:</FieldLabel>
            <Field id="zwe" disabled defaultValue="0" /><Text $off>m</Text>
          </Fields>
          <Line $pad="0 0 0 115px"><Picture $w={182} $h={142}><Pressure /></Picture></Line>
        </Panel>
        <Line $pad="8px 0 0 18px"><Option name="pres" off h={17}>Presiones definidas por el usuario</Option></Line>
      </Group>
    </Group>
    <Actions gap={5} pad="6px 2px 0 0" />
  </Dialog>
);

const ROWS = [['1.0000', '0.3000', '0.3000'], ['0.3000', '1.0000', '0.3000'], ['0.3000', '0.3000', '1.0000']];

const Accidental = () => (
  <Dialog title="Acciones accidentales" x={10} y={485} w={616} gap={9} foot={12}>
    <Group title="Acción sísmica" pad="15px 7px 9px 11px">
      <Group title="Sismo transmitido por el tablero" pad="12px 4px 6px 23px" gap={8}>
        <Fields $row={21} $gap={3} $cols="185px 1fr" $pad="0 0 0 5px">
          {['X', 'Y', 'Z'].map(a => (
            <React.Fragment key={a}>
              <span>Sismo en la dirección global {a} (S{a})</span><Push>Editar</Push>
            </React.Fragment>
          ))}
        </Fields>
        <Group title="Coeficientes de combinación" pad="9px 0 6px">
          <Sheet>
            <thead>
              <tr>
                <Corner>Combinaciones</Corner>
                {['X', 'Y', 'Z'].map((a, i) => <ColHead key={a} $hot={i === 0}>Sismo en la<br />dirección global {a}</ColHead>)}
              </tr>
            </thead>
            <tbody>
              {ROWS.map((r, i) => (
                <tr key={i}>
                  <RowHead $hot={i === 0}>Combinación {i + 1}</RowHead>
                  {r.map((v, j) => <Cell key={j} $hot={i === 0 && j === 0}>{v}</Cell>)}
                </tr>
              ))}
            </tbody>
          </Sheet>
        </Group>
      </Group>
    </Group>
    <Actions gap={6} pad="0 3px 0 0" />
  </Dialog>
);

const Abutment = () => (
  <Dialog title="Acciones accidentales en el estribo" x={1344} y={614} w={541} foot={17}>
    <Group title="Acción sísmica" pad="10px 0 14px 286px"><Push>Editar</Push></Group>
    <Group title="Acción de impacto de vehículos contra las aletas" pad="2px 15px 14px 15px">
      <Line $align="flex-start" $justify="space-between">
        <Fields $arial $gap={6} $cols="131px 67px auto" $pad="28px 0 0">
          <FieldLabel htmlFor="af">Fuerza horizontal, F:</FieldLabel><Field id="af" $w={60} defaultValue="0" /><span>kN</span>
          <FieldLabel htmlFor="ab">Anchura de actuación, B:</FieldLabel><Field id="ab" $w={60} defaultValue="0" /><span>m</span>
          <FieldLabel htmlFor="ah">Altura de aplicación, H :</FieldLabel><Field id="ah" $w={60} defaultValue="0" /><span>m</span>
          <FieldLabel htmlFor="at">Ángulo de reparto, <Greek>θ</Greek> :</FieldLabel><Field id="at" $w={60} defaultValue="0" /><span>º</span>
        </Fields>
        <Picture $w={202} $h={253}><Impact /></Picture>
      </Line>
    </Group>
    <Actions gap={8} pad="5px 0 0 0" />
  </Dialog>
);

export default function App() {
  return (
    <>
      <Global />
      <Desktop>
        <Main />
        <Permanent />
        <Sismo />
        <Variable />
        <Accidental />
        <Abutment />
        <Model />
      </Desktop>
    </>
  );
}
